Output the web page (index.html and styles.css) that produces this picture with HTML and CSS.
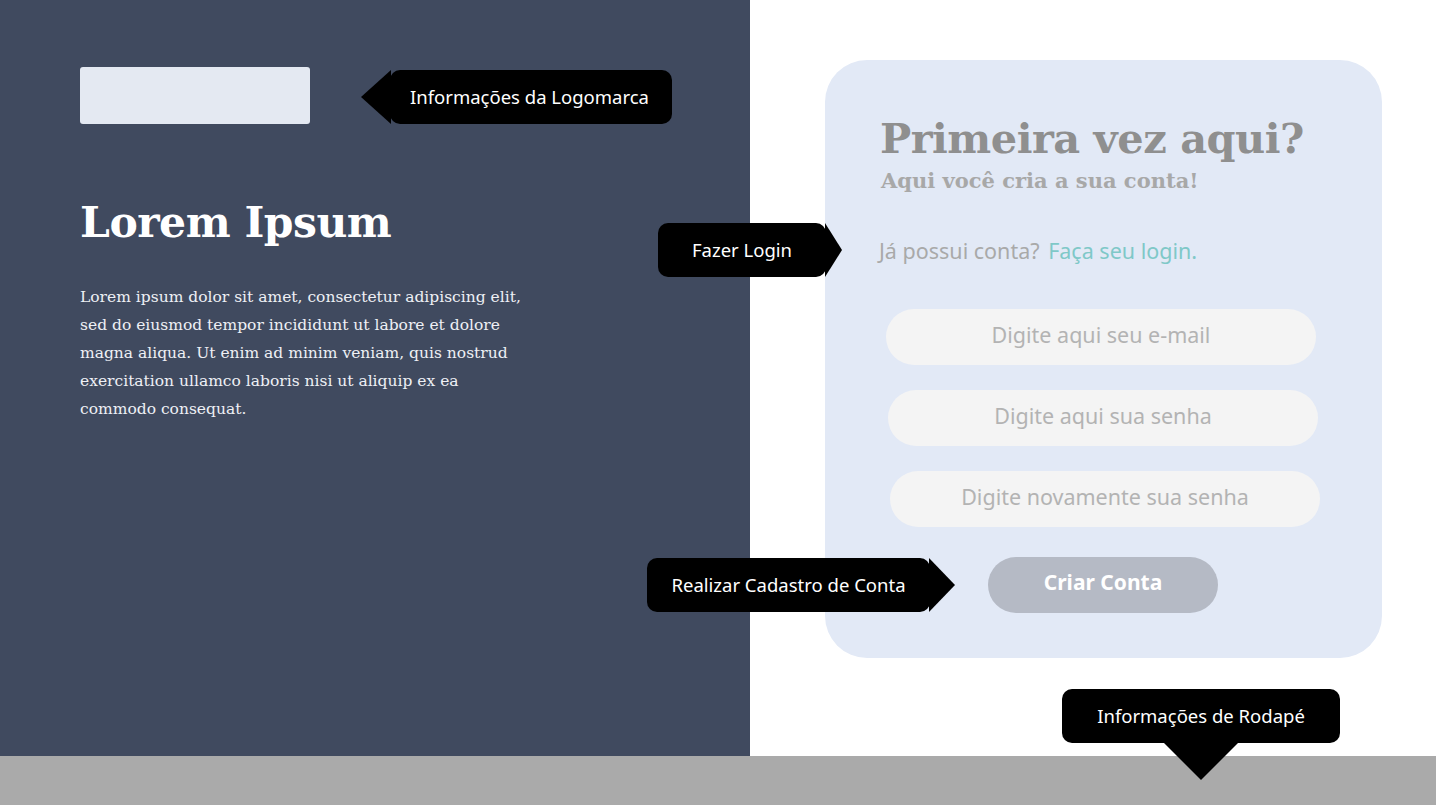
FILE: index.html
```html
<!DOCTYPE html>
<html lang="pt-BR">
<head>
<meta charset="utf-8">
<title>Cadastro</title>
<link rel="stylesheet" href="styles.css">
</head>
<body>
<div class="page">
  <div class="main">
    <section class="left">
      <div class="logo"></div>
      <h1 class="hero-title">Lorem Ipsum</h1>
      <p class="hero-text">Lorem ipsum dolor sit amet, consectetur adipiscing elit, sed do eiusmod tempor incididunt ut labore et dolore magna aliqua. Ut enim ad minim veniam, quis nostrud exercitation ullamco laboris nisi ut aliquip ex ea commodo consequat.</p>
    </section>
    <section class="right">
      <div class="card">
        <h2 class="card-title">Primeira vez aqui?</h2>
        <p class="card-sub">Aqui você cria a sua conta!</p>
        <p class="login-line">Já possui conta? <a class="login-link" href="#">Faça seu login.</a></p>
        <div class="fields">
          <div class="field f1">Digite aqui seu e-mail</div>
          <div class="field f2">Digite aqui sua senha</div>
          <div class="field f3">Digite novamente sua senha</div>
        </div>
        <div class="btn-row"><button class="btn">Criar Conta</button></div>
      </div>
    </section>
  </div>
  <footer class="footer"></footer>

  <div class="tip tip-logo">Informações da Logomarca</div>
  <div class="tip tip-login">Fazer Login</div>
  <div class="tip tip-cad">Realizar Cadastro de Conta</div>
  <div class="tip tip-foot">Informações de Rodapé</div>
</div>
</body>
</html>
```
FILE: styles.css
```css
* { box-sizing: border-box; }
html, body { margin: 0; padding: 0; }
body { background: #fff; font-family: "Noto Sans", sans-serif; }
.page { position: relative; width: 1436px; height: 805px; overflow: hidden; display: flex; flex-direction: column; }
.main { display: flex; height: 756px; }
.left { width: 750px; background: #404a5f; padding: 67px 80px 0 80px; }
.logo { width: 230px; height: 57px; background: #e4e9f2; border-radius: 3px; }
.hero-title { margin: 68px 0 0 0; font-family: "DejaVu Serif", serif; font-weight: bold; font-size: 42.5px; line-height: 60px; color: #fff; letter-spacing: -0.5px; }
.hero-text { margin: 31px 0 0 0; width: 450px; font-family: "DejaVu Serif", serif; font-size: 15.5px; line-height: 28px; color: #eef0f5; }
.right { flex: 1; padding: 60px 0 0 75px; }
.card { width: 557px; height: 598px; background: #e2e9f6; border-radius: 42px; padding: 51px 0 0 55px; }
.card-title { margin: 0; font-family: "DejaVu Serif", serif; font-weight: bold; font-size: 41.5px; line-height: 56px; color: #8f8f8f; letter-spacing: -0.5px; }
.card-sub { margin: 0 0 0 1px; font-family: "DejaVu Serif", serif; font-weight: bold; font-size: 21px; line-height: 28px; color: #a8a8a8; }
.login-line { margin: 42px 0 0 -1px; font-size: 21.5px; line-height: 28px; color: #a9a9a9; }
.login-link { margin-left: 3px; color: #7fc8c8; text-decoration: none; }
.fields { margin-top: 44px; display: flex; flex-direction: column; gap: 25px; }
.field { width: 430px; height: 56px; border-radius: 28px; background: #f4f4f4; color: #b3b3b3; font-size: 21.5px; display: flex; align-items: center; justify-content: center; padding-bottom: 6px; }
.f1 { margin-left: 6px; }
.f2 { margin-left: 8px; }
.f3 { margin-left: 10px; }
.btn-row { margin-top: 30px; padding-left: 108px; }
.btn { width: 230px; height: 56px; border: 0; border-radius: 28px; background: #b5bac5; color: #fff; font-family: "Noto Sans", sans-serif; font-weight: bold; font-size: 21px; padding: 0 0 6px 0; }
.footer { height: 49px; background: #aaaaaa; }

.tip { position: absolute; height: 54px; background: #000; color: #fff; border-radius: 10px; font-size: 18.5px; display: flex; align-items: center; justify-content: center; padding-bottom: 2px; }
.tip::after { content: ""; position: absolute; border: 0 solid transparent; }
.tip-logo { left: 390px; top: 70px; width: 282px; padding-right: 3px; }
.tip-logo::after { left: -29px; top: 0; border-width: 27px 30px 27px 0; border-right-color: #000; }
.tip-login { left: 658px; top: 223px; width: 168px; }
.tip-login::after { right: -16px; top: 0; border-width: 27px 0 27px 17px; border-left-color: #000; }
.tip-cad { left: 647px; top: 558px; width: 283px; }
.tip-cad::after { right: -25px; top: 0; border-width: 27px 0 27px 26px; border-left-color: #000; }
.tip-foot { left: 1062px; top: 689px; width: 278px; }
.tip-foot::after { left: 102px; bottom: -37px; border-width: 37px 37px 0 37px; border-top-color: #000; }
```
